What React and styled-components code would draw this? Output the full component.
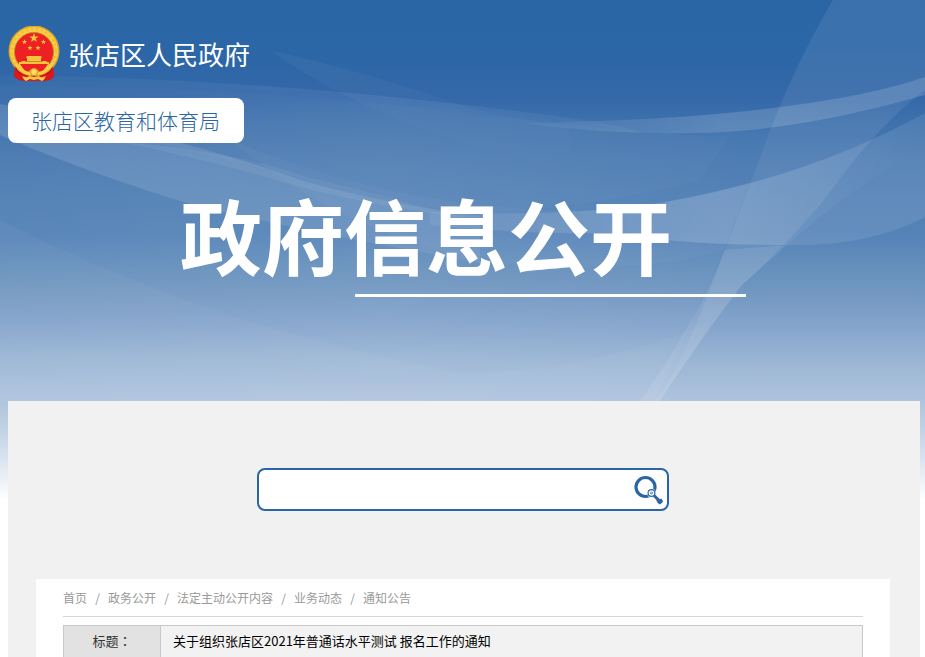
import React from 'react';
import styled, { createGlobalStyle } from 'styled-components';

const GlobalStyle = createGlobalStyle`
  * { box-sizing: border-box; }
  body {
    margin: 0;
    background: #fff;
    color: #000;
    font-family: "Noto Sans CJK SC", sans-serif;
    font-size: 12px;
    overflow: hidden;
  }
`;

const Page = styled.div`
  position: relative;
  min-height: 100vh;
  padding: 0 5px 0 8px;
  background: linear-gradient(
    #2a65a5 0, #2b66a6 50px, #3468a9 98px, #3f72ad 125px, #4a7ab2 160px, #5180b5 200px,
    #5583b8 235px, #6690bc 270px, #7599c3 298px, #87a6cd 330px, #9ab5d4 360px,
    #aec3dd 400px, #c6d5e6 435px, #dfe7f2 465px, #ffffff 500px, #ffffff 100%
  );
`;

const Waves = styled.svg`
  position: absolute;
  top: 0;
  left: 0;
  width: 100%;
  height: 401px;
`;

const Header = styled.header`
  position: relative;
  display: flex;
  flex-direction: column;
  align-items: flex-start;
  height: 401px;
  padding: 26px 2px 0 0;
`;

const Brand = styled.a`
  display: flex;
  align-items: center;
  gap: 8px;
  height: 56px;
  color: #fff;
  font-size: 26px;
  line-height: 56px;
  text-decoration: none;
`;

const Department = styled.a`
  margin-top: 16px;
  padding: 0 24px 0 23px;
  border-radius: 8px;
  background: #fff;
  color: #2a65a5;
  font-size: 21px;
  font-weight: 300;
  line-height: 45px;
  text-decoration: none;
`;

const Banner = styled.div`
  display: flex;
  flex-direction: column;
  align-self: center;
  gap: 8px;
  width: 566px;
  margin-top: 39px;
`;

const BannerTitle = styled.h1`
  margin: 0;
  color: #fff;
  font-size: 82px;
  font-weight: 700;
  line-height: 104px;
  white-space: nowrap;
`;

const BannerLine = styled.div`
  align-self: flex-end;
  width: 391px;
  height: 3px;
  background: #fff;
`;

const Panel = styled.main`
  position: relative;
  min-height: calc(100vh - 401px);
  padding: 67px 30px 0 28px;
  background: #f1f1f1;
`;

const SearchForm = styled.form`
  display: flex;
  align-items: center;
  width: 412px;
  height: 43px;
  margin: 0 auto 68px;
  border: 2px solid #2a65a5;
  border-radius: 8px;
  background: #fff;
`;

const SearchInput = styled.input`
  flex: 1;
  min-width: 0;
  height: 100%;
  padding: 0 12px;
  border: 0;
  outline: 0;
  background: transparent;
  font: inherit;
  font-size: 14px;
`;

const SearchButton = styled.button`
  display: flex;
  padding: 0;
  margin-right: 3px;
  border: 0;
  background: transparent;
  cursor: pointer;
`;

const Article = styled.section`
  min-height: 78px;
  padding: 0 27px;
  background: #fff;
`;

const Breadcrumb = styled.nav`
  display: flex;
  height: 38px;
  margin-bottom: 8px;
  border-bottom: 1px solid #d6d6d6;
  color: #999;
  line-height: 38px;
`;

const Crumb = styled.a`
  color: #999;
  text-decoration: none;
`;

const Separator = styled.span`
  width: 21px;
  text-align: center;
`;

const InfoTable = styled.table`
  width: 100%;
  border-collapse: collapse;
  font-size: 13px;
  line-height: 30px;

  th, td {
    height: 34px;
    padding: 0;
    border: 1px solid #c8c8c8;
    vertical-align: top;
  }
  th {
    width: 97px;
    background: #e2e2e2;
    color: #333;
    font-family: "Noto Sans CJK TC", sans-serif;
    font-weight: 400;
  }
  td {
    padding-left: 12px;
    background: #f2f2f2;
  }
`;

const star = (cx, cy, r) =>
  Array.from({ length: 10 }, (_, i) => {
    const radius = i % 2 ? r * 0.4 : r;
    const angle = (Math.PI * i) / 5 - Math.PI / 2;
    return `${cx + radius * Math.cos(angle)},${cy + radius * Math.sin(angle)}`;
  }).join(' ');

function Emblem() {
  return (
    <svg width="52" height="56" viewBox="0 0 52 56" aria-hidden="true">
      <path d="M7 38 6 51l5 3 5 1h20l6-1 4-3-1-13z" fill="#d9151b" />
      <circle cx="26" cy="25" r="25.500" fill="#dda42b" />
      <circle cx="26" cy="25" r="24" fill="#f8cc45" />
      <circle cx="26" cy="25" r="22" fill="none" stroke="#dfa329" strokeWidth="2" strokeDasharray="2 3" opacity=".4" />
      <circle cx="26" cy="26" r="19.500" fill="#ed2024" stroke="#c8861d" strokeWidth="1" />
      <g fill="#f5c43d">
        <polygon points={star(26, 12, 5)} />
        <polygon points={star(16.5, 16, 2.8)} />
        <polygon points={star(35.5, 16, 2.8)} />
        <polygon points={star(22, 22, 2.8)} />
        <polygon points={star(30, 22, 2.8)} />
        <path d="M19 30h14l1 2h-1v3H19v-3h-1z" />
        <path d="M14 35h24l1 1h2v2H11v-2h2z" />
      </g>
      <path d="M17 35.500h18" stroke="#d4882b" />
      <path d="M11 39h30l-6 6-5 1-4-2-4 2-5-1z" fill="#ed2024" />
      <path d="M12 38c3 5 6 8 9 8 2-5 8-5 10 0 3 0 6-3 9-8l4 1c-4 7-9 10-14 10l-4-2-4 2C17 49 12 46 8 39z" fill="#f8cc45" />
      <circle cx="26" cy="46" r="3.500" fill="#ffdc62" stroke="#d18c22" />
      <path d="M7 40c1 4 5 6 8 8l-1 6-7-3z" fill="#dd171c" />
      <path d="M45 40c-1 4-5 6-8 8l1 6 7-3z" fill="#dd171c" />
      <path d="M8 42c1 3 2 4 5 6M44 42c-1 3-2 4-5 6" fill="none" stroke="#a90d12" />
      <path d="M15 48c4 1 6 3 11 2 5 1 7-1 11-2l1 7H14z" fill="#dd171c" />
      <path d="M14 50c3 1 5 2 7 0l5 1 5-1c2 2 4 1 7 0-1 2-2 4-4 5l-4-2-4 1-4-1-4 2c-2-1-3-3-4-5z" fill="#f7ca43" />
    </svg>
  );
}

function SearchIcon() {
  return (
    <svg width="30" height="32" viewBox="0 0 30 32" aria-hidden="true">
      <circle cx="11.500" cy="13" r="9.500" fill="none" stroke="#2a65a5" strokeWidth="3.200" />
      <circle cx="17.500" cy="19" r="4.500" fill="#fff" />
      <circle cx="17.500" cy="19" r="3.400" fill="#fff" stroke="#2a65a5" strokeWidth="1.200" />
      <circle cx="17.500" cy="19" r="1" fill="none" stroke="#2a65a5" strokeWidth=".8" />
      <path d="m20 21.500 7.500 7.500" stroke="#2a65a5" strokeWidth="3" />
      <path d="m22 27 2.500-2.500 1 1 2-1 1.500 3-3 3-3-2 .5-1z" fill="#2a65a5" />
    </svg>
  );
}

function BackgroundWaves() {
  return (
    <Waves viewBox="0 0 925 401" preserveAspectRatio="none" aria-hidden="true">
      <defs>
        <linearGradient id="bodyFade" x1="0" x2="1">
          <stop offset="0" stopColor="#fff" stopOpacity=".03" />
          <stop offset=".5" stopColor="#fff" stopOpacity=".07" />
          <stop offset="1" stopColor="#fff" stopOpacity=".02" />
        </linearGradient>
        <linearGradient id="leftBand" x1="0" x2="1">
          <stop offset="0" stopColor="#fff" stopOpacity=".13" />
          <stop offset="1" stopColor="#fff" stopOpacity=".07" />
        </linearGradient>
        <linearGradient id="upperBand" x1="0" x2="1">
          <stop offset="0" stopColor="#fff" stopOpacity=".03" />
          <stop offset=".5" stopColor="#fff" stopOpacity=".15" />
          <stop offset="1" stopColor="#fff" stopOpacity=".14" />
        </linearGradient>
        <linearGradient id="middleBand" x1="0" x2="1">
          <stop offset="0" stopColor="#fff" stopOpacity=".06" />
          <stop offset=".6" stopColor="#fff" stopOpacity=".17" />
          <stop offset="1" stopColor="#fff" stopOpacity=".08" />
        </linearGradient>
        <linearGradient id="crest" x1="0" y1="0" x2="0" y2="1">
          <stop offset="0" stopColor="#fff" stopOpacity=".04" />
          <stop offset="1" stopColor="#fff" stopOpacity="0" />
        </linearGradient>
      </defs>
      <path d="M0 75Q220 78 430 101T640 133Q690 134 771 128L724 250 655 401H0z" fill="url(#bodyFade)" />
      <path d="M0 86Q240 86 460 112T730 136L700 180Q590 210 460 213 300 180 0 104z" fill="#fff" fillOpacity=".02" />
      <path d="M270 50Q380 76 460 105 510 119 570 126L570 170Q380 130 270 50z" fill="url(#crest)" />
      <path d="M0 104Q170 133 300 180 380 203 480 216V263Q330 236 200 207 90 174 0 135z" fill="url(#leftBand)" />
      <path d="M120 142Q230 150 310 178 390 197 470 219 370 205 300 187 210 160 120 142z" fill="#fff" fillOpacity=".06" />
      <path d="M0 219Q70 257 180 298T460 373Q590 371 700 326L655 401H0z" fill="#fff" fillOpacity=".03" />
      <path d="M230 140Q400 210 580 211 650 209 750 182L724 250Q640 276 500 263 350 240 230 140z" fill="#fff" fillOpacity=".03" />
      <path d="M833 0C801 54 785 94 771 128 748 188 727 247 697 322Q680 367 655 401H660Q706 331 742 285 782 249 820 205C850 165 880 124 925 90V0z" fill="#fff" fillOpacity=".08" />
      <path d="M520 123Q680 121 780 107 870 96 925 77V95Q830 122 750 130 640 139 520 123z" fill="url(#upperBand)" />
      <path d="M430 212Q570 217 660 203 810 177 925 113V148Q850 188 787 245 680 245 610 233 540 235 430 225z" fill="url(#middleBand)" />
      <path d="M925 148Q850 188 787 245 868 247 925 217z" fill="#fff" fillOpacity=".09" />
      <path d="M724 250Q704 310 640 401H660Q706 331 742 285L787 245z" fill="#fff" fillOpacity=".09" />
    </Waves>
  );
}

const crumbs = ['首页', '政务公开', '法定主动公开内容', '业务动态', '通知公告'];

export default function App() {
  return (
    <>
      <GlobalStyle />
      <Page>
        <BackgroundWaves />
        <Header>
          <Brand href="#">
            <Emblem />
            张店区人民政府
          </Brand>
          <Department href="#">张店区教育和体育局</Department>
          <Banner>
            <BannerTitle>政府信息公开</BannerTitle>
            <BannerLine />
          </Banner>
        </Header>
        <Panel>
          <SearchForm role="search" onSubmit={(event) => event.preventDefault()}>
            <SearchInput type="text" aria-label="搜索" />
            <SearchButton type="submit" aria-label="搜索">
              <SearchIcon />
            </SearchButton>
          </SearchForm>
          <Article>
            <Breadcrumb>
              {crumbs.map((crumb, index) => (
                <React.Fragment key={crumb}>
                  {index > 0 && <Separator>/</Separator>}
                  <Crumb href="#">{crumb}</Crumb>
                </React.Fragment>
              ))}
            </Breadcrumb>
            <InfoTable>
              <tbody>
                <tr>
                  <th scope="row">标题：</th>
                  <td>关于组织张店区2021年普通话水平测试 报名工作的通知</td>
                </tr>
              </tbody>
            </InfoTable>
          </Article>
        </Panel>
      </Page>
    </>
  );
}
